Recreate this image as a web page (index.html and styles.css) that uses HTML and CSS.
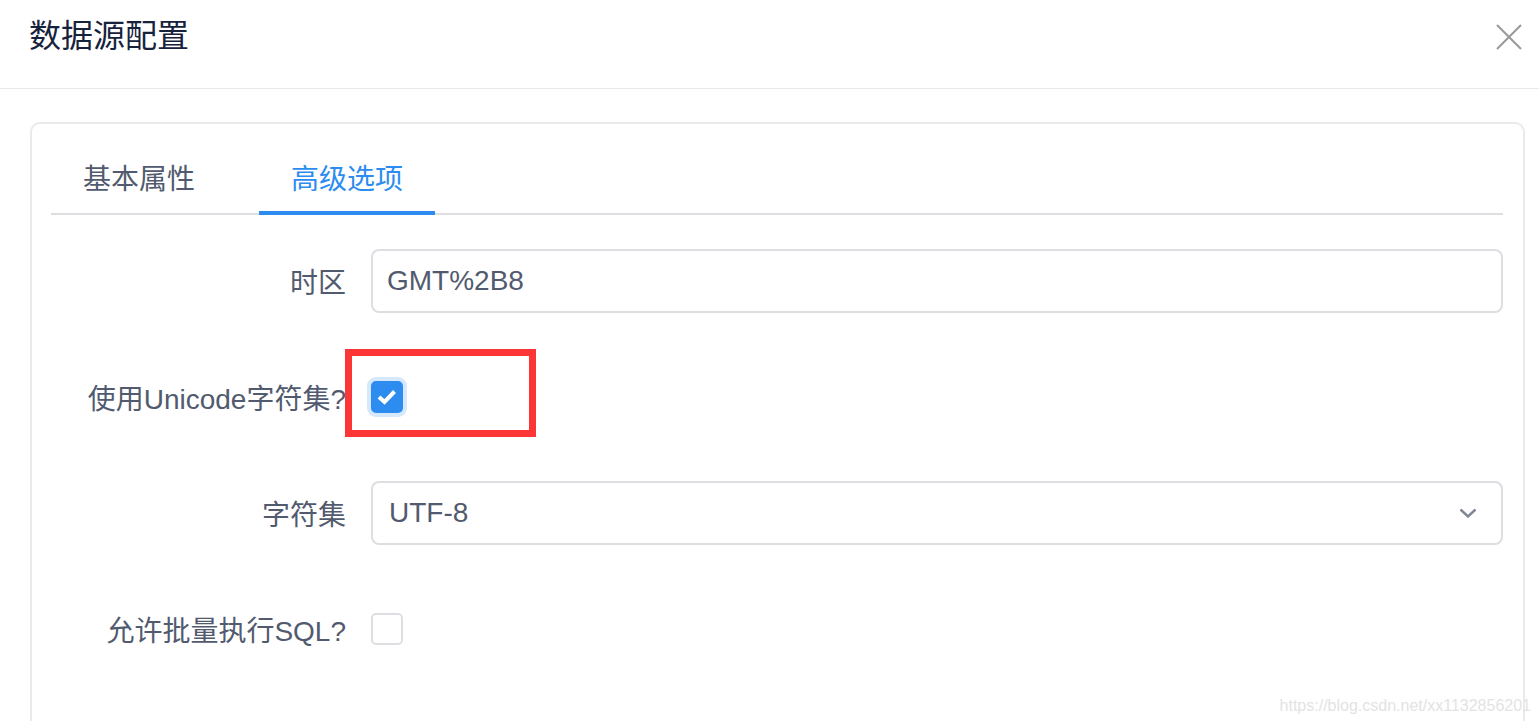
FILE: index.html
```html
<!DOCTYPE html>
<html lang="zh-CN">
<head>
    <meta charset="UTF-8">
    <meta name="viewport" content="width=device-width, initial-scale=1.0">
    <title>数据源配置</title>
    <link rel="stylesheet" href="styles.css">
</head>
<body>
    <div class="modal">
        <div class="modal-header">
            <p class="modal-title">数据源配置</p>
            <a class="modal-close">
                <svg width="26" height="26" viewBox="0 0 26 26">
                    <path d="M1 1 L25 25 M25 1 L1 25" stroke="#999" stroke-width="2" fill="none"/>
                </svg>
            </a>
        </div>
        <div class="modal-body">
            <div class="card">
                <div class="tabs-nav">
                    <div class="tab">基本属性</div>
                    <div class="tab active">高级选项</div>
                </div>
                <form class="form">
                    <div class="form-item">
                        <label class="form-label">时区</label>
                        <div class="form-content">
                            <input class="input" type="text" value="GMT%2B8">
                        </div>
                    </div>
                    <div class="form-item">
                        <label class="form-label">使用Unicode字符集?</label>
                        <div class="form-content">
                            <span class="checkbox checked focus">
                                <svg width="32" height="32" viewBox="0 0 32 32">
                                    <path d="M8 16 L13.5 21 L23.5 10.5" stroke="#fff" stroke-width="4" fill="none"/>
                                </svg>
                            </span>
                        </div>
                        <div class="mark"></div>
                    </div>
                    <div class="form-item">
                        <label class="form-label">字符集</label>
                        <div class="form-content">
                            <div class="select">
                                <span class="select-value">UTF-8</span>
                                <svg class="arrow" width="18" height="10" viewBox="0 0 18 10">
                                    <path d="M1.5 1.5 L9 8.5 L16.5 1.5" stroke="#808695" stroke-width="2.4" fill="none"/>
                                </svg>
                            </div>
                        </div>
                    </div>
                    <div class="form-item">
                        <label class="form-label">允许批量执行SQL?</label>
                        <div class="form-content">
                            <span class="checkbox"></span>
                        </div>
                    </div>
                </form>
            </div>
        </div>
        <div class="watermark">https://blog.csdn.net/xx1132856201</div>
    </div>
</body>
</html>
```

FILE: styles.css
```css
html, body{
    margin: 0;
    height: 100%;
    overflow: hidden;
    background: #fff;
}
.modal{
    position: relative;
    height: 100%;
    font-family: "Liberation Sans", "Noto Sans CJK SC", sans-serif;
    color: #515a6e;
}
.modal-header{
    height: 89px;
    border-bottom: 1px solid #e8eaec;
    display: flex;
    justify-content: space-between;
    padding: 0 17px 0 29px;
    box-sizing: border-box;
}
.modal-title{
    margin: 0;
    padding-top: 16px;
    font-size: 32px;
    line-height: 40px;
    color: #17233d;
}
.modal-close{
    padding-top: 24px;
}
.modal-body{
    padding: 33px 14px 0 30px;
}
.card{
    border: 2px solid #e8eaec;
    border-radius: 10px;
    padding: 22px 20px 0 19px;
    height: 700px;
}
.tabs-nav{
    display: flex;
    gap: 32px;
    border-bottom: 2px solid #dcdee2;
}
.tab{
    position: relative;
    padding: 0 32px;
    height: 67px;
    line-height: 67px;
    font-size: 28px;
    color: #515a6e;
}
.tab.active{
    color: #2d8cf0;
}
.tab.active::after{
    content: "";
    position: absolute;
    left: 0;
    right: 0;
    bottom: -2px;
    height: 4px;
    background: #2d8cf0;
}
.form{
    padding-top: 34px;
}
.form-item{
    position: relative;
    display: flex;
    align-items: center;
    height: 64px;
    margin-bottom: 52px;
}
.form-label{
    width: 320px;
    padding-right: 25px;
    box-sizing: border-box;
    text-align: right;
    font-size: 28px;
    color: #515a6e;
}
.form-content{
    flex: 1;
    display: flex;
    align-items: center;
}
.input{
    width: 100%;
    height: 64px;
    box-sizing: border-box;
    border: 2px solid #dcdee2;
    border-radius: 8px;
    padding: 0 14px;
    font-family: "Liberation Sans", "Noto Sans CJK SC", sans-serif;
    font-size: 28px;
    color: #515a6e;
    outline: none;
}
.select{
    width: 100%;
    height: 64px;
    box-sizing: border-box;
    border: 2px solid #dcdee2;
    border-radius: 8px;
    padding: 0 24px 0 16px;
    display: flex;
    align-items: center;
    justify-content: space-between;
    font-size: 28px;
}
.checkbox{
    width: 32px;
    height: 32px;
    box-sizing: border-box;
    border: 2px solid #dcdee2;
    border-radius: 5px;
    background: #fff;
    display: block;
}
.checkbox.checked{
    border-color: #2d8cf0;
    background: #2d8cf0;
}
.checkbox.checked svg{
    display: block;
    margin: -2px;
}
.checkbox.focus{
    box-shadow: 0 0 0 4px rgba(45, 140, 240, 0.2);
}
.mark{
    position: absolute;
    left: 294px;
    top: -16px;
    width: 191px;
    height: 88px;
    box-sizing: border-box;
    border: 7px solid #fc3636;
}
.watermark{
    position: absolute;
    right: 8px;
    bottom: 6px;
    font-size: 16px;
    color: #e3e3e3;
}
```
